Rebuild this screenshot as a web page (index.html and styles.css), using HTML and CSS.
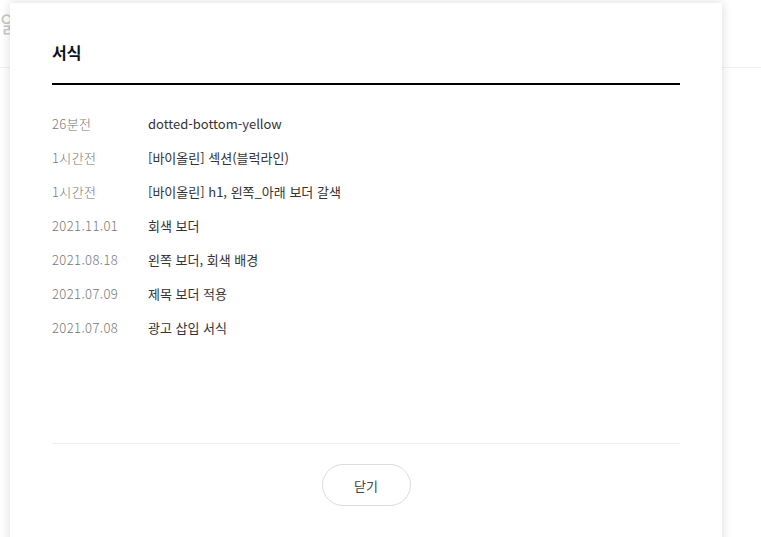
FILE: index.html
```html
<!DOCTYPE html>
<html lang="ko">
<head>
    <meta charset="UTF-8">
    <meta name="viewport" content="width=device-width, initial-scale=1.0">
    <title>서식</title>
    <link rel="stylesheet" href="styles.css">
</head>
<body>

    <div class="page">
        <div class="page-header">
            <span class="page-title">읽</span>
        </div>
    </div>

    <div class="modal">
        <h2 class="modal-title">서식</h2>
        <ul class="history">
            <li class="history-item"><span class="date">26분전</span><span class="name">dotted-bottom-yellow</span></li>
            <li class="history-item"><span class="date">1시간전</span><span class="name">[바이올린] 섹션(블럭라인)</span></li>
            <li class="history-item"><span class="date">1시간전</span><span class="name">[바이올린] h1, 왼쪽_아래 보더 갈색</span></li>
            <li class="history-item"><span class="date">2021.11.01</span><span class="name">회색 보더</span></li>
            <li class="history-item"><span class="date">2021.08.18</span><span class="name">왼쪽 보더, 회색 배경</span></li>
            <li class="history-item"><span class="date">2021.07.09</span><span class="name">제목 보더 적용</span></li>
            <li class="history-item"><span class="date">2021.07.08</span><span class="name">광고 삽입 서식</span></li>
        </ul>
        <div class="modal-footer">
            <button class="button" onclick="closeModal()">닫기</button>
        </div>
    </div>

    <script>
        function closeModal() {
            document.querySelector('.modal').style.display = 'none';
        }
    </script>

</body>
</html>
```

FILE: styles.css
```css
body {
    font-family: "Noto Sans CJK KR", "Noto Sans", sans-serif;
    background-color: #fff;
    margin: 0;
    height: 100vh;
    overflow: hidden;
    position: relative;
}
.page-header {
    height: 67px;
    border-bottom: 1px solid #f0f0f0;
    overflow: hidden;
}
.page-title {
    display: block;
    margin: 6px 0 0 0;
    font-size: 22px;
    color: #c8c8c8;
}
.modal {
    position: absolute;
    top: 3px;
    left: 10px;
    width: 712px;
    height: 560px;
    box-sizing: border-box;
    padding: 0 42px;
    background-color: #fff;
    box-shadow: 0px 0px 10px rgba(0, 0, 0, 0.15);
}
.modal-title {
    margin: 0;
    padding: 38px 0 19px;
    font-size: 16px;
    font-weight: bold;
    line-height: 23px;
    color: #111;
    border-bottom: 2px solid #000;
}
.history {
    list-style: none;
    margin: 0;
    padding: 21px 0 0;
    height: 337px;
    border-bottom: 1px solid #eee;
}
.history-item {
    display: flex;
    height: 34px;
    align-items: center;
    font-size: 13px;
}
.date {
    width: 96px;
    color: #777;
    font-weight: 300;
    letter-spacing: 0.4px;
}
.name {
    color: #333;
}
.modal-footer {
    display: flex;
    justify-content: center;
    padding-top: 20px;
}
.button {
    width: 89px;
    height: 42px;
    font-family: inherit;
    font-size: 13px;
    color: #444;
    background-color: #fff;
    border: 1px solid #ddd;
    border-radius: 21px;
    cursor: pointer;
}
```
